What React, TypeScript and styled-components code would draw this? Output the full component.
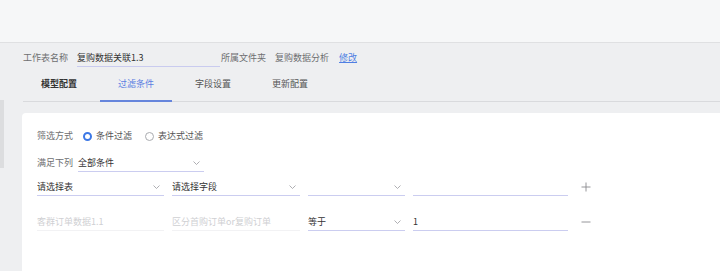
import styled, { createGlobalStyle } from "styled-components"

const GlobalStyle = createGlobalStyle`
  html, body {
    margin: 0;
    padding: 0;
    height: 100%;
  }
  body {
    font-family: "Noto Sans CJK SC", "Noto Sans", sans-serif;
    font-size: 9px;
    color: #333;
    background: #eeeff1;
  }
  #root {
    height: 100%;
  }
`;

const Page = styled.div`
  display: flex;
  flex-direction: column;
  height: 100vh;
  overflow: hidden;
`;

const TopBar = styled.div`
  height: 42px;
  flex-shrink: 0;
  background: #f6f7f8;
  border-bottom: 1px solid #dfe0e2;
  box-shadow: 0 1px 2px rgba(0, 0, 0, 0.04);
`;

const Workspace = styled.div`
  position: relative;
  flex: 1;
  display: flex;
  flex-direction: column;
  background: #eeeff1;
`;

const ScrollThumb = styled.div`
  position: absolute;
  left: 0;
  top: 57px;
  width: 4px;
  height: 68px;
  background: #dcdddf;
`;

const Header = styled.div`
  padding: 7px 0 0 23px;
`;

const NameRow = styled.div`
  display: flex;
  align-items: flex-start;
  line-height: 16px;
`;

const Label = styled.span<{ $gap?: number }>`
  color: #6d6e70;
  margin-right: ${(p) => p.$gap ?? 9}px;
  white-space: nowrap;
`;

const NameField = styled.div`
  width: 143px;
  height: 16px;
  border-bottom: 1px solid #c9cbef;
  color: #333;
  margin-right: 1px;
`;

const FolderName = styled.span`
  color: #6d6e70;
  margin-right: 10px;
`;

const EditLink = styled.a`
  color: #4f7fe3;
  text-decoration: underline;
  cursor: pointer;
`;

const Tabs = styled.div`
  display: flex;
  gap: 5px;
  border-bottom: 1px solid #d9dadd;
`;

const Tab = styled.div<{ $active?: boolean; $bold?: boolean }>`
  width: 72px;
  box-sizing: border-box;
  padding: 9px 18px 8px;
  line-height: 16px;
  margin-bottom: -1px;
  border-bottom: 2px solid ${(p) => (p.$active ? "#6685dc" : "transparent")};
  color: ${(p) => (p.$active ? "#5b7ee2" : p.$bold ? "#333" : "#555")};
  font-weight: ${(p) => (p.$bold ? 700 : 400)};
  white-space: nowrap;
`;

const Card = styled.div`
  flex: 1;
  margin: 11px 0 0 22px;
  background: #fff;
  border-top-left-radius: 4px;
  padding: 15px 0 0 15px;
  display: flex;
  flex-direction: column;
`;

const FormRow = styled.div<{ $top?: number }>`
  display: flex;
  align-items: flex-start;
  gap: 8px;
  margin-top: ${(p) => p.$top ?? 0}px;
  line-height: 16px;
`;

const InlineRow = styled.div`
  display: flex;
  align-items: center;
  line-height: 16px;
`;

const RadioOption = styled.label`
  display: flex;
  align-items: center;
  gap: 4px;
  margin-right: 13px;
  color: #555;
`;

const RadioDot = styled.span<{ $checked?: boolean }>`
  width: 9px;
  height: 9px;
  box-sizing: border-box;
  border-radius: 50%;
  background: #fff;
  border: ${(p) => (p.$checked ? "2.5px solid #3d78e6" : "1px solid #a9abaf")};
`;

const Select = styled.div<{ $width: number; $muted?: boolean }>`
  width: ${(p) => p.$width}px;
  height: 16px;
  display: flex;
  align-items: center;
  justify-content: space-between;
  border-bottom: 1px solid ${(p) => (p.$muted ? "#f2f2f4" : "#cbcdf0")};
  color: ${(p) => (p.$muted ? "#cfd0d3" : "#333")};
  white-space: nowrap;
  overflow: hidden;
`;

const Chevron = styled.svg`
  width: 7px;
  height: 4px;
  margin-right: 4px;
  flex-shrink: 0;
`;

const IconButton = styled.svg`
  width: 10px;
  height: 10px;
  margin: 3px 0 0 5px;
`;

const Arrow = () => (
  <Chevron viewBox="0 0 7 4">
    <path d="M0.5 0.5 L3.5 3.5 L6.5 0.5" fill="none" stroke="#9a9ba0" strokeWidth="0.8" />
  </Chevron>
)

const FieldSelect = ({ width, text, muted, arrow = true }: { width: number; text?: string; muted?: boolean; arrow?: boolean }) => (
  <Select $width={width} $muted={muted}>
    <span>{text}</span>
    {arrow && <Arrow />}
  </Select>
)

export default function App() {
  return (
    <Page>
      <GlobalStyle />
      <TopBar />
      <Workspace>
        <ScrollThumb />
        <Header>
          <NameRow>
            <Label>工作表名称</Label>
            <NameField>复购数据关联1.3</NameField>
            <Label>所属文件夹</Label>
            <FolderName>复购数据分析</FolderName>
            <EditLink>修改</EditLink>
          </NameRow>
          <Tabs>
            <Tab $bold>模型配置</Tab>
            <Tab $active>过滤条件</Tab>
            <Tab>字段设置</Tab>
            <Tab>更新配置</Tab>
          </Tabs>
        </Header>

        <Card>
          <InlineRow>
            <Label $gap={10}>筛选方式</Label>
            <RadioOption>
              <RadioDot $checked />
              条件过滤
            </RadioOption>
            <RadioOption>
              <RadioDot />
              表达式过滤
            </RadioOption>
          </InlineRow>

          <FormRow $top={11}>
            <Label $gap={-3}>满足下列</Label>
            <FieldSelect width={126} text="全部条件" />
          </FormRow>

          <FormRow $top={7}>
            <FieldSelect width={127} text="请选择表" />
            <FieldSelect width={128} text="请选择字段" />
            <FieldSelect width={97} />
            <Select $width={155} />
            <IconButton viewBox="0 0 10 10">
              <path d="M5 0.5 V9.5 M0.5 5 H9.5" stroke="#8a8b8f" strokeWidth="0.9" />
            </IconButton>
          </FormRow>

          <FormRow $top={18}>
            <FieldSelect width={127} text="客群订单数据1.1" muted arrow={false} />
            <FieldSelect width={128} text="区分首购订单or复购订单" muted arrow={false} />
            <FieldSelect width={97} text="等于" />
            <Select $width={155}>1</Select>
            <IconButton viewBox="0 0 10 10">
              <path d="M0.5 5 H9.5" stroke="#8a8b8f" strokeWidth="0.9" />
            </IconButton>
          </FormRow>
        </Card>
      </Workspace>
    </Page>
  )
}
